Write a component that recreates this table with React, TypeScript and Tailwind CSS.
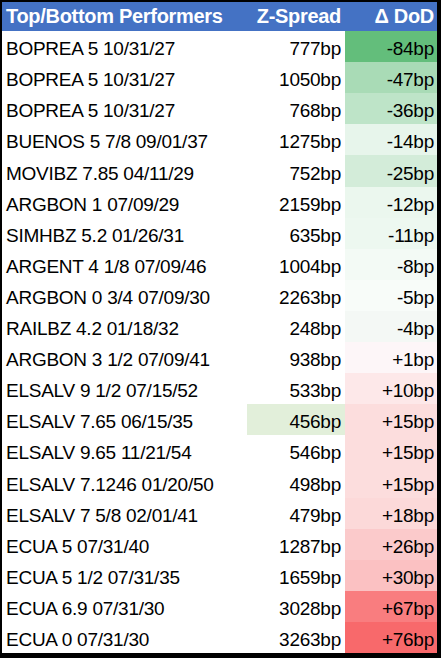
import React from "react";

type Row = { name: string; z: string; d: string; bg: string; zbg?: string };

const rows: Row[] = [
  { name: "BOPREA 5 10/31/27", z: "777bp", d: "-84bp", bg: "bg-[#63be7b]" },
  { name: "BOPREA 5 10/31/27", z: "1050bp", d: "-47bp", bg: "bg-[#a9dbb6]" },
  { name: "BOPREA 5 10/31/27", z: "768bp", d: "-36bp", bg: "bg-[#bee4c8]" },
  { name: "BUENOS 5 7/8 09/01/37", z: "1275bp", d: "-14bp", bg: "bg-[#e7f5eb]" },
  { name: "MOVIBZ 7.85 04/11/29", z: "752bp", d: "-25bp", bg: "bg-[#d3ecd9]" },
  { name: "ARGBON 1 07/09/29", z: "2159bp", d: "-12bp", bg: "bg-[#ebf7ee]" },
  { name: "SIMHBZ 5.2 01/26/31", z: "635bp", d: "-11bp", bg: "bg-[#edf8f0]" },
  { name: "ARGENT 4 1/8 07/09/46", z: "1004bp", d: "-8bp", bg: "bg-[#f3faf5]" },
  { name: "ARGBON 0 3/4 07/09/30", z: "2263bp", d: "-5bp", bg: "bg-[#f8fcf9]" },
  { name: "RAILBZ 4.2 01/18/32", z: "248bp", d: "-4bp", bg: "bg-[#f4f8f5]" },
  { name: "ARGBON 3 1/2 07/09/41", z: "938bp", d: "+1bp", bg: "bg-[#fdf6f8]" },
  { name: "ELSALV 9 1/2 07/15/52", z: "533bp", d: "+10bp", bg: "bg-[#fde8e9]" },
  { name: "ELSALV 7.65 06/15/35", z: "456bp", d: "+15bp", bg: "bg-[#fcdddd]", zbg: "bg-[#e2efda]" },
  { name: "ELSALV 9.65 11/21/54", z: "546bp", d: "+15bp", bg: "bg-[#fcdddd]" },
  { name: "ELSALV 7.1246 01/20/50", z: "498bp", d: "+15bp", bg: "bg-[#fcdddd]" },
  { name: "ELSALV 7 5/8 02/01/41", z: "479bp", d: "+18bp", bg: "bg-[#fcd9d9]" },
  { name: "ECUA 5 07/31/40", z: "1287bp", d: "+26bp", bg: "bg-[#fbcacb]" },
  { name: "ECUA 5 1/2 07/31/35", z: "1659bp", d: "+30bp", bg: "bg-[#fbc1c2]" },
  { name: "ECUA 6.9 07/31/30", z: "3028bp", d: "+67bp", bg: "bg-[#f97d7f]" },
  { name: "ECUA 0 07/31/30", z: "3263bp", d: "+76bp", bg: "bg-[#f8696b]" },
];

export default function App() {
  return (
    <div
      className="w-[441px] h-[658px] bg-black pt-[2px] pl-[2px] pr-[4px] pb-[5px] text-black"
      style={{ fontFamily: '"Liberation Sans", Arial, sans-serif' }}
    >
      <div className="h-full bg-white grid grid-cols-[245px_98px_92px] grid-rows-[29px_repeat(20,1fr)] text-[19px] leading-[22px] tracking-[-0.25px]">
        <div className="bg-[#4472c4] text-white font-bold text-[20px] tracking-[-0.3px] flex items-end pl-[4px] pb-[4px] whitespace-nowrap">
          Top/Bottom Performers
        </div>
        <div className="bg-[#4472c4] text-white font-bold text-[20px] tracking-[-0.3px] flex items-end justify-end pr-[4px] pb-[4px] whitespace-nowrap">
          Z-Spread
        </div>
        <div className="bg-[#4472c4] text-white font-bold text-[20px] tracking-[-0.3px] flex items-end justify-end pr-[3px] pb-[4px] whitespace-nowrap">
          Δ DoD
        </div>
        {rows.map((r, i) => (
          <React.Fragment key={i}>
            <div className="flex items-end pl-[4px] pb-[2px] whitespace-nowrap">{r.name}</div>
            <div className={`flex items-end justify-end pr-[4px] pb-[2px] whitespace-nowrap ${r.zbg ?? ""}`}>
              {r.z}
            </div>
            <div className={`flex items-end justify-end pr-[3px] pb-[2px] whitespace-nowrap ${r.bg}`}>
              {r.d}
            </div>
          </React.Fragment>
        ))}
      </div>
    </div>
  );
}
